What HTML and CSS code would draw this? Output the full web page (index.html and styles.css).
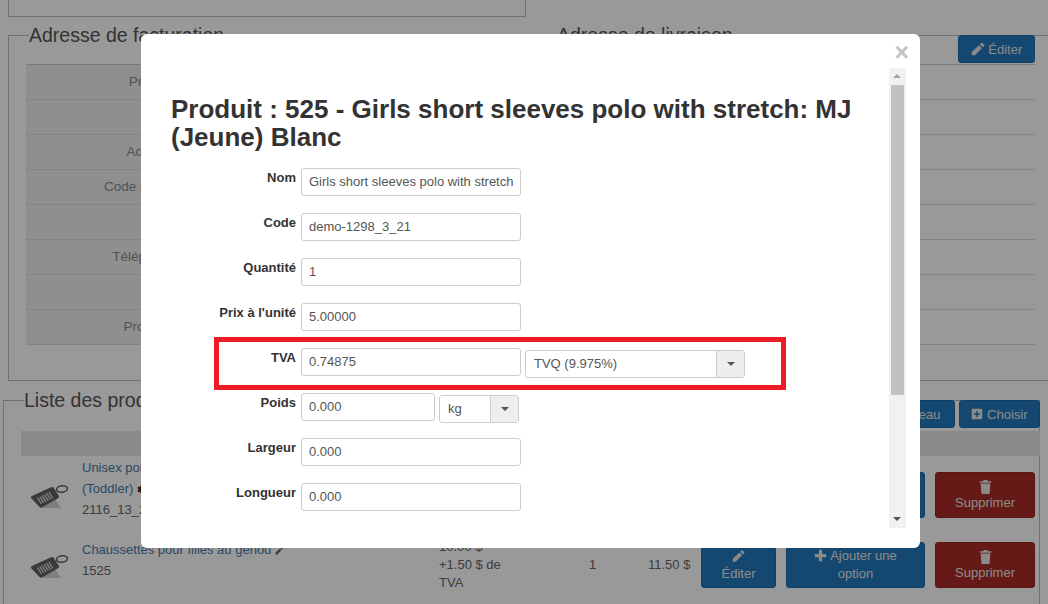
FILE: index.html
```html
<!DOCTYPE html>
<html lang="fr">
<head>
<meta charset="utf-8">
<title>Produit</title>
<link rel="stylesheet" href="styles.css">
</head>
<body>
<svg class="defs" width="0" height="0" aria-hidden="true">
  <symbol id="i-pencil" viewBox="0 0 16 16"><path d="M11.6 1.2a1 1 0 0 1 1.4 0l2 2a1 1 0 0 1 0 1.4l-1.5 1.5-3.4-3.4zM9.1 3.7l3.4 3.4-8 8H0.9v-3.6z"/></symbol>
  <symbol id="i-plus" viewBox="0 0 16 16"><path d="M6 1h4v5h5v4h-5v5H6v-5H1V6h5z"/></symbol>
  <symbol id="i-plus-square" viewBox="0 0 16 16"><path fill-rule="evenodd" d="M2.5 1h11A1.5 1.5 0 0 1 15 2.500v11a1.500 1.500 0 0 1-1.500 1.500h-11A1.500 1.500 0 0 1 1 13.500v-11A1.500 1.500 0 0 1 2.500 1zM7 4v3H4v2h3v3h2V9h3V7H9V4z"/></symbol>
  <symbol id="i-trash" viewBox="0 0 14 16"><path d="M5 0h4l1 1.500h3.500V3H.5V1.500H4zM1.500 4h11l-.7 10.500A1.500 1.500 0 0 1 10.300 16H3.700a1.500 1.500 0 0 1-1.500-1.500z"/></symbol>
  <symbol id="i-tag" viewBox="0 0 40 26">
    <path d="M12 24 L31 24 L23 12 Z" fill="#d2d2d2"/>
    <path d="M1 14 Q0.500 12.500 2 12 L21 3.200 Q22.500 2.600 23.500 3.500 L29 12 Q29.500 13.500 28 14.300 L12 23.500 Q10.500 24.300 9.500 23 Z" fill="#626262"/>
    <path d="M7.500 13.600l4 6.400M9.800 12.500l4 6.400M12 11.400l4 6.400M14.300 10.300l4 6.400M16.600 9.200l4 6.400M18.900 8.100l4 6.400" stroke="#d8d8d8" stroke-width="1.300" fill="none"/>
    <ellipse cx="32" cy="5" rx="5.500" ry="3.200" fill="none" stroke="#626262" stroke-width="1.500" transform="rotate(-10 32 5)"/>
  </symbol>
</svg>

<div class="page">
  <div class="top-box"></div>

  <div class="addresses">
    <fieldset class="panel address">
      <legend>Adresse de facturation</legend>
      <dl class="address-table">
        <div class="address-row"><dt>Prénom</dt><dd></dd></div>
        <div class="address-row"><dt>Nom</dt><dd></dd></div>
        <div class="address-row"><dt>Adresse</dt><dd></dd></div>
        <div class="address-row"><dt>Code postal</dt><dd></dd></div>
        <div class="address-row"><dt>Ville</dt><dd></dd></div>
        <div class="address-row"><dt>Téléphone</dt><dd></dd></div>
        <div class="address-row"><dt>Pays</dt><dd></dd></div>
        <div class="address-row"><dt>Province</dt><dd></dd></div>
      </dl>
    </fieldset>
    <fieldset class="panel address address-right">
      <legend>Adresse de livraison</legend>
      <button class="btn btn-blue btn-edit-address"><svg class="ico"><use href="#i-pencil"/></svg> Éditer</button>
      <dl class="address-table">
        <div class="address-row"><dt>Prénom</dt><dd></dd></div>
        <div class="address-row"><dt>Nom</dt><dd></dd></div>
        <div class="address-row"><dt>Adresse</dt><dd></dd></div>
        <div class="address-row"><dt>Code postal</dt><dd></dd></div>
        <div class="address-row"><dt>Ville</dt><dd></dd></div>
        <div class="address-row"><dt>Téléphone</dt><dd></dd></div>
        <div class="address-row"><dt>Pays</dt><dd></dd></div>
        <div class="address-row"><dt>Province</dt><dd></dd></div>
      </dl>
    </fieldset>
  </div>

  <fieldset class="panel products">
    <legend>Liste des produits</legend>
    <div class="product-tools">
      <button class="btn btn-blue">Nouveau</button>
      <button class="btn btn-blue"><svg class="ico"><use href="#i-plus-square"/></svg> Choisir</button>
    </div>
    <div class="product-head"></div>

    <div class="product-row product-row-first">
      <svg class="tag"><use href="#i-tag"/></svg>
      <div class="product-info">
        <a href="#">Unisex polo<br>(Toddler)</a> <span class="mini">✱</span><br>2116_13_21
      </div>
      <div class="product-actions">
        <button class="btn btn-blue btn-stack btn-e"><svg class="ico"><use href="#i-pencil"/></svg>Éditer</button>
        <button class="btn btn-blue btn-stack btn-a"><span><svg class="ico"><use href="#i-plus"/></svg> Ajouter une</span>option</button>
        <button class="btn btn-red btn-stack btn-s"><svg class="ico"><use href="#i-trash"/></svg>Supprimer</button>
      </div>
    </div>

    <div class="product-row">
      <svg class="tag"><use href="#i-tag"/></svg>
      <div class="product-info">
        <a href="#">Chaussettes pour filles au genou</a> <svg class="ico ico-mini"><use href="#i-pencil"/></svg><br>1525
      </div>
      <div class="product-price">10.00 $<br>+1.50 $ de TVA</div>
      <div class="product-qty">1</div>
      <div class="product-total">11.50 $</div>
      <div class="product-actions">
        <button class="btn btn-blue btn-stack btn-e"><svg class="ico"><use href="#i-pencil"/></svg>Éditer</button>
        <button class="btn btn-blue btn-stack btn-a"><span><svg class="ico"><use href="#i-plus"/></svg> Ajouter une</span>option</button>
        <button class="btn btn-red btn-stack btn-s"><svg class="ico"><use href="#i-trash"/></svg>Supprimer</button>
      </div>
    </div>
  </fieldset>
</div>

<div class="overlay"></div>

<div class="modal">
  <div class="modal-close">×</div>
  <div class="modal-body">
    <h1>Produit : 525 - Girls short sleeves polo with stretch: MJ (Jeune) Blanc</h1>
    <div class="form-row"><label>Nom</label><input class="field" value="Girls short sleeves polo with stretch"></div>
    <div class="form-row"><label>Code</label><input class="field" value="demo-1298_3_21"></div>
    <div class="form-row"><label>Quantité</label><input class="field" value="1"></div>
    <div class="form-row"><label>Prix à l'unité</label><input class="field" value="5.00000"></div>
    <div class="form-row"><label>TVA</label><input class="field" value="0.74875">
      <div class="select select-wide"><span>TVQ (9.975%)</span><b></b></div>
    </div>
    <div class="form-row"><label>Poids</label><input class="field field-short" value="0.000">
      <div class="select select-short"><span>kg</span><b></b></div>
    </div>
    <div class="form-row"><label>Largeur</label><input class="field" value="0.000"></div>
    <div class="form-row"><label>Longueur</label><input class="field" value="0.000"></div>
  </div>
  <div class="scrollbar">
    <div class="scroll-up"></div>
    <div class="scroll-thumb"></div>
    <div class="scroll-down"></div>
  </div>
  <div class="highlight"></div>
</div>
</body>
</html>
```

FILE: styles.css
```css
* { box-sizing: border-box; }
html, body { margin: 0; padding: 0; height: 604px; overflow: hidden; }
body { background: #fff; font-family: "Liberation Sans", Arial, sans-serif; font-size: 13px; color: #777; position: relative; }
.defs { position: absolute; }
.page { height: 604px; overflow: hidden; }

.top-box { height: 17px; margin: 0 522px 0 8px; border: 1px solid #bbb; border-top: 0; }

.addresses { display: flex; margin-top: 7px; gap: 10px; }
.panel { margin: 0; border: 1px solid #bbb; padding: 0; min-width: 0; position: relative; }
.panel legend { font-size: 19.500px; line-height: 23px; color: #555; padding: 0 5px 0 0; margin-left: 3px; }
.address { height: 357px; padding: 17px 0 0 17px; }
.addresses .address:first-child { width: 518px; margin-left: 8px; padding-right: 0; }
.address-right { flex: 1; margin-right: -20px; padding-right: 32px; }

.address-table { margin: 0; border-top: 1px solid #ccc; }
.address-row { display: flex; height: 35px; border-bottom: 1px solid #ddd; }
.address-row dt { width: 150px; background: #eee; text-align: right; line-height: 34px; font-size: 13.500px; color: #888; }
.address-row dd { margin: 0; flex: 1; }

.btn { border: 1px solid #1c6ca8; border-radius: 3px; background: #2379bd; color: #e6e6e6; font-family: inherit; font-size: 13px; padding: 0; }
.btn-red { background: #aa2c27; border-color: #962520; }
.ico { width: 12px; height: 12px; fill: currentColor; vertical-align: -1px; }
.btn-edit-address { position: absolute; top: -12px; right: 32px; width: 77px; height: 28px; }
.btn-edit-address .ico { width: 14px; height: 14px; vertical-align: -2px; }

.products { margin: 8px 8px 0 3px; padding: 0 0 0 17px; height: 260px; }
.product-tools { display: flex; justify-content: flex-end; gap: 4px; margin-top: -12px; height: 28px; margin-right: -1px; }
.product-tools .btn { width: 81px; }
.product-head { height: 25px; margin: 3px -1px 0 0; background: #e6e6e6; }

.product-row { display: flex; align-items: flex-start; height: 70px; }
.product-row-first { height: 82px; }
.tag { width: 40px; height: 26px; margin: 16px 12px 0 9px; flex: none; }
.product-row-first .tag { margin-top: 28px; }
.product-info { width: 357px; line-height: 20.500px; padding-top: 2px; color: #666; flex: none; }
.product-info a { color: #4a78a8; text-decoration: none; }
.mini { font-size: 10px; color: #222; font-weight: bold; }
.ico-mini { width: 8px; height: 8px; }
.product-price { width: 86px; margin-right: 64px; line-height: 18px; color: #666; flex: none; }
.product-qty { width: 59px; color: #666; line-height: 18px; padding-top: 18px; flex: none; }
.product-total { width: 50px; color: #666; line-height: 18px; padding-top: 18px; flex: none; }
.product-actions { margin-left: auto; display: flex; gap: 10px; padding: 4px 4px 0 0; }
.product-row-first .product-actions { padding-top: 16px; }
.btn-stack { height: 46px; display: flex; flex-direction: column; align-items: center; justify-content: center; line-height: 18px; font-size: 13px; padding-top: 1px; }
.btn-stack .ico { width: 13px; height: 14px; }
.btn-e { width: 75px; }
.btn-a { width: 139px; padding-top: 0; }
.btn-s { width: 100px; }
.btn-e .ico { margin-bottom: 2px; }
.btn-a .ico { width: 13px; height: 13px; vertical-align: -2px; }

.overlay { position: absolute; inset: 0; background: rgba(0, 0, 0, .4); }

.modal { position: absolute; left: 141px; top: 34px; width: 779px; height: 514px; background: #fff; border-radius: 6px; overflow: hidden; color: #333; }
.modal-close { position: absolute; top: 5px; right: 11px; font-size: 25px; line-height: 26px; font-weight: bold; color: #c4c4c4; }
.modal-body { position: absolute; left: 14px; top: 34px; width: 735px; height: 460px; overflow: hidden; padding: 27px 16px 0 16px; }
h1 { margin: 0 0 17px; font-size: 26px; line-height: 28px; font-weight: bold; color: #333; }
.form-row { display: flex; align-items: flex-start; height: 45px; }
.form-row label { width: 130px; padding: 1px 5px 0 0; text-align: right; font-size: 13px; font-weight: bold; line-height: 18px; color: #333; }
.field { width: 220px; height: 28px; padding: 0 7px 2px; border: 1px solid #ccc; border-radius: 3px; font-family: inherit; font-size: 13px; color: #555; background: #fff; outline: none; }
.field-short { width: 134px; }
.select { display: flex; height: 28px; margin: 2px 0 0 4px; border: 1px solid #ccc; border-radius: 3px; font-size: 13px; line-height: 26px; color: #555; }
.select span { flex: 1; padding-left: 8px; }
.select b { width: 28px; background: #eee; border-left: 1px solid #ccc; position: relative; }
.select b::after { content: ""; position: absolute; left: 10px; top: 11px; border: 4px solid transparent; border-top-color: #555; border-bottom: 0; }
.select-wide { width: 220px; }
.select-short { width: 80px; }

.scrollbar { position: absolute; left: 748px; top: 34px; width: 17px; height: 460px; background: #f1f1f1; }
.scroll-up { height: 17px; position: relative; }
.scroll-up::after { content: ""; position: absolute; left: 4px; top: 6px; border: 4px solid transparent; border-bottom-color: #a3a3a3; border-top: 0; }
.scroll-thumb { height: 310px; margin: 0 2px; background: #c1c1c1; }
.scroll-down { position: absolute; bottom: 0; left: 0; width: 17px; height: 17px; }
.scroll-down::after { content: ""; position: absolute; left: 4px; top: 6px; border: 4px solid transparent; border-top-color: #505050; border-bottom: 0; }

.highlight { position: absolute; left: 73px; top: 303px; width: 572px; height: 53px; border: 5px solid #ed1c24; pointer-events: none; }
```
